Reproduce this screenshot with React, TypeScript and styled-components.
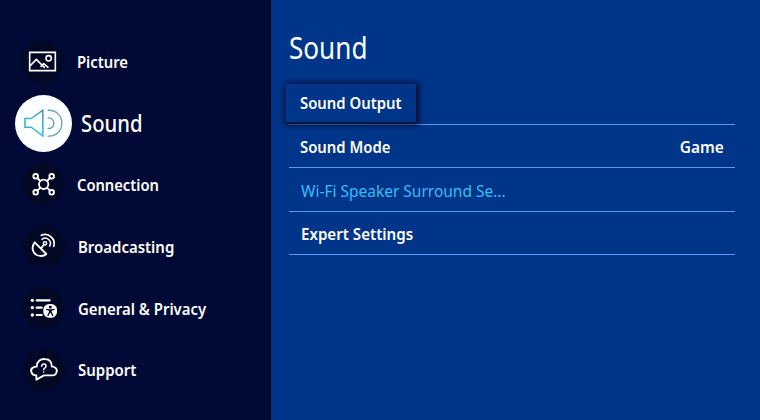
import React from "react";
import styled, { createGlobalStyle } from "styled-components";

const GlobalStyle = createGlobalStyle`
  * { box-sizing: border-box; }
  body { margin: 0; overflow: hidden; background: #00358a; }
`;

const Screen = styled.div`
  display: flex;
  width: 760px;
  height: 420px;
  background: #00358a;
  color: #fff;
  font-family: "Noto Sans", "Open Sans", sans-serif;
`;

const Sidebar = styled.nav`
  width: 271px;
  height: 420px;
  flex: none;
  padding: 31px 0 0 14px;
  background: #010937;
`;

const NavItem = styled.div`
  display: flex;
  align-items: center;
  height: 61.7px;
`;

const IconSlot = styled.div<{ $inset: number; $lift: number }>`
  flex: none;
  width: 58px;
  padding: 0 0 ${(p) => p.$lift * 2}px ${(p) => p.$inset}px;
`;

const Disc = styled.div<{ $active?: boolean }>`
  width: ${(p) => (p.$active ? 57 : 42)}px;
  height: ${(p) => (p.$active ? 57 : 42)}px;
  border-radius: 50%;
  background: ${(p) => (p.$active ? "#fcffff" : "#030824")};
  svg { display: block; width: 100%; height: 100%; }
`;

const Text = styled.span<{ $scale: number; $size?: number; $weight?: number }>`
  display: block;
  white-space: nowrap;
  font-size: ${(p) => p.$size ?? 16}px;
  line-height: 24px;
  font-weight: ${(p) => p.$weight ?? 600};
  transform: scaleX(${(p) => p.$scale});
  transform-origin: left center;
`;

const NavLabel = styled(Text)<{ $indent: number; $active?: boolean }>`
  margin-left: ${(p) => p.$indent}px;
  padding-bottom: ${(p) => (p.$active ? 2 : 0)}px;
`;

const Content = styled.main`
  flex: 1;
  padding: 28px 25px 0 18px;
`;

const Title = styled.h1`
  margin: 0;
  height: 53px;
  font-weight: 400;
  line-height: 40px;
`;

const TitleText = styled(Text)`
  line-height: 40px;
`;

const Row = styled.div<{ $height: number; $indent?: number }>`
  display: flex;
  align-items: center;
  justify-content: space-between;
  height: ${(p) => p.$height}px;
  padding: 2px 11px 0 ${(p) => p.$indent ?? 11}px;
  border-bottom: 1px solid #5a98f5;
`;

const FocusRow = styled(Row)`
  padding: 0;
`;

const FocusBox = styled.div`
  display: flex;
  align-items: center;
  width: 130px;
  height: 38px;
  margin: 0 0 0 -3px;
  padding-left: 14px;
  background: #00358a;
  box-shadow: 1px 1px 6px 2px rgba(0, 8, 40, 0.95);
`;

const MutedText = styled(Text)`
  color: #38bdf5;
`;

const ValueText = styled(Text)`
  transform-origin: right center;
`;

const line = {
  fill: "none",
  stroke: "#fff",
  strokeWidth: 5.5,
  strokeLinecap: "round" as const,
  strokeLinejoin: "round" as const,
};

const PictureIcon = () => (
  <svg viewBox="33 32 126 126" {...line} strokeWidth={4.8}>
    <path d="M59 66H136V121H59Z" strokeLinejoin="miter" />
    <circle cx="116" cy="84" r="8" />
    <path d="M60 107L79 87L103 111M93 108L101 100L114 111" />
  </svg>
);

const SoundIcon = () => (
  <svg viewBox="13 13 172 172" {...line} strokeWidth={4}>
    <defs>
      <linearGradient id="speaker" x1="0" y1="1" x2="1" y2="0">
        <stop offset="0" stopColor="#4f9eae" />
        <stop offset="0.5" stopColor="#31bdd8" />
        <stop offset="1" stopColor="#548d9c" />
      </linearGradient>
    </defs>
    <path d="M43 84H62L97 59V137L62 110H43Z" stroke="url(#speaker)" strokeLinejoin="miter" strokeWidth={4.5} />
    <path d="M113 82C136 80 136 116 113 114" stroke="#55a5b5" />
    <path d="M113 59C168 57 168 139 113 137" stroke="#729ead" />
  </svg>
);

const ConnectionIcon = () => (
  <svg viewBox="34 24 126 126" {...line}>
    <circle cx="99" cy="88" r="14" />
    <circle cx="75" cy="64" r="7" />
    <circle cx="123" cy="64" r="7" />
    <circle cx="75" cy="112" r="7" />
    <circle cx="123" cy="112" r="7" />
    <path d="M80 69L89 78M118 69L109 78M80 107L89 98M118 107L109 98" />
  </svg>
);

const BroadcastIcon = () => (
  <svg viewBox="38 16 126 126" {...line}>
    <path d="M73 68C62 82 67 100 79 106C89 110 101 109 108 103Z" />
    <path d="M92 86L100 76" />
    <circle cx="104" cy="71" r="5" strokeWidth={4.5} />
    <path d="M95 59A15.5 15.5 0 0 1 118 79" strokeWidth={4.5} />
    <path d="M93 47A27 27 0 0 1 130 80" strokeWidth={5} />
  </svg>
);

const GeneralIcon = () => (
  <svg viewBox="35 19 126 126" {...line} strokeWidth={6.5}>
    <path d="M79 59H118M79 81H94M79 103H94" />
    <g fill="#fff" stroke="none">
      <circle cx="66" cy="59" r="5" />
      <circle cx="66" cy="81" r="5" />
      <circle cx="66" cy="103" r="5" />
      <rect x="99" y="70" width="41" height="41" rx="17" />
    </g>
    <circle cx="120" cy="79" r="4.5" fill="#030824" stroke="none" />
    <path d="M109 86L117 88H123L131 86M118 88V94L113 104M122 88V94L127 104M120 88V95" stroke="#030824" strokeWidth={4} />
  </svg>
);

const SupportIcon = () => (
  <svg viewBox="37 24 126 126" {...line}>
    <path d="M77 116V103C62 104 56 86 67 80C70 77 74 77 78 77C79 60 91 53 103 54C116 54 124 64 123 76C134 77 140 84 138 92C137 101 130 104 123 103H100Z" />
    <path d="M93 76C93 66 107 67 106 76C106 81 99 81 99 86" strokeWidth={4.5} />
    <circle cx="99" cy="93" r="2.4" fill="#fff" stroke="none" />
  </svg>
);

const items = [
  { label: "Picture", Icon: PictureIcon, inset: 7, lift: 0, indent: 5, scale: 0.925 },
  { label: "Sound", Icon: SoundIcon, active: true, inset: 0.5, lift: 0.5, indent: 9, scale: 0.88 },
  { label: "Connection", Icon: ConnectionIcon, inset: 7.5, lift: 1, indent: 5, scale: 0.92 },
  { label: "Broadcasting", Icon: BroadcastIcon, inset: 8.5, lift: 0.5, indent: 5.5, scale: 0.935 },
  { label: "General & Privacy", Icon: GeneralIcon, inset: 8, lift: 1, indent: 6, scale: 0.932 },
  { label: "Support", Icon: SupportIcon, inset: 8.5, lift: 0.5, indent: 6, scale: 0.937 },
];

export default function App() {
  return (
    <>
      <GlobalStyle />
      <Screen>
        <Sidebar>
          {items.map(({ label, Icon, active, inset, lift, indent, scale }) => (
            <NavItem key={label}>
              <IconSlot $inset={inset} $lift={lift}>
                <Disc $active={active}>
                  <Icon />
                </Disc>
              </IconSlot>
              <NavLabel
                $active={active}
                $indent={indent}
                $scale={scale}
                $size={active ? 23 : 16}
                $weight={active ? 500 : 600}
              >
                {label}
              </NavLabel>
            </NavItem>
          ))}
        </Sidebar>
        <Content>
          <Title>
            <TitleText $scale={0.87} $size={30} $weight={400}>Sound</TitleText>
          </Title>
          <FocusRow $height={44}>
            <FocusBox>
              <Text $scale={0.93}>Sound Output</Text>
            </FocusBox>
          </FocusRow>
          <Row $height={43}>
            <Text $scale={0.928}>Sound Mode</Text>
            <ValueText $scale={0.96}>Game</ValueText>
          </Row>
          <Row $height={44} $indent={12}>
            <MutedText $scale={0.968} $weight={400}>Wi-Fi Speaker Surround Se...</MutedText>
          </Row>
          <Row $height={43} $indent={12}>
            <Text $scale={0.945}>Expert Settings</Text>
          </Row>
        </Content>
      </Screen>
    </>
  );
}
